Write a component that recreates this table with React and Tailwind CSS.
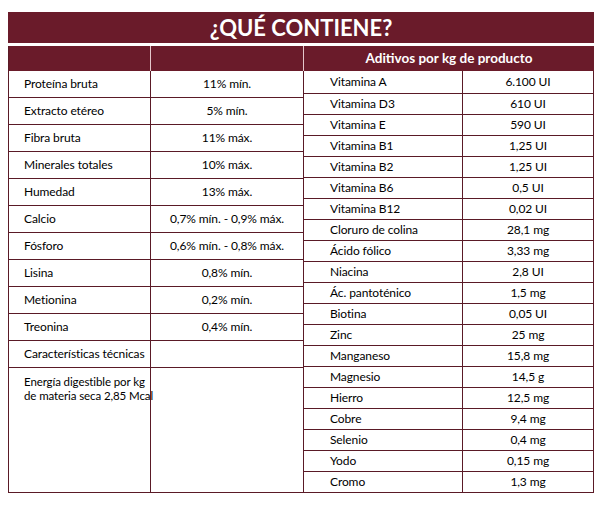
const nutrients = [
  ['Proteína bruta', '11% mín.'],
  ['Extracto etéreo', '5% mín.'],
  ['Fibra bruta', '11% máx.'],
  ['Minerales totales', '10% máx.'],
  ['Humedad', '13% máx.'],
  ['Calcio', '0,7% mín. - 0,9% máx.'],
  ['Fósforo', '0,6% mín. - 0,8% máx.'],
  ['Lisina', '0,8% mín.'],
  ['Metionina', '0,2% mín.'],
  ['Treonina', '0,4% mín.'],
];

const additives = [
  ['Vitamina A', '6.100 UI'],
  ['Vitamina D3', '610 UI'],
  ['Vitamina E', '590 UI'],
  ['Vitamina B1', '1,25 UI'],
  ['Vitamina B2', '1,25 UI'],
  ['Vitamina B6', '0,5 UI'],
  ['Vitamina B12', '0,02 UI'],
  ['Cloruro de colina', '28,1 mg'],
  ['Ácido fólico', '3,33 mg'],
  ['Niacina', '2,8 UI'],
  ['Ác. pantoténico', '1,5 mg'],
  ['Biotina', '0,05 UI'],
  ['Zinc', '25 mg'],
  ['Manganeso', '15,8 mg'],
  ['Magnesio', '14,5 g'],
  ['Hierro', '12,5 mg'],
  ['Cobre', '9,4 mg'],
  ['Selenio', '0,4 mg'],
  ['Yodo', '0,15 mg'],
  ['Cromo', '1,3 mg'],
];

function App() {
  return (
    <div
      className="min-h-[506px] bg-white pt-[12px] pl-[8px] text-black"
      style={{ fontFamily: 'Lato, "Liberation Sans", sans-serif' }}
    >
      <div className="w-[586px]">

        {/* Title */}
        <div className="flex h-[31px] items-center justify-center bg-[#6a1b2a]">
          <h1 className="text-[22px] font-bold leading-none text-white">¿QUÉ CONTIENE?</h1>
        </div>

        <div className="mt-[3px] flex">

          {/* Left table */}
          <div className="w-[296px] border-l border-[#5a1a26]">
            <div className="flex h-[25px] bg-[#6a1b2a]">
              <div className="w-[142px] border-r border-[#e4c6ca]" />
              <div className="flex-1 border-r border-[#e4c6ca]" />
            </div>
            {nutrients.map(([label, value]) => (
              <div key={label} className="flex h-[27px] border-b border-[#5a1a26] text-[12px] tracking-[-0.1px] whitespace-nowrap">
                <div className="flex w-[142px] items-center border-r border-[#5a1a26] pl-[15px]">{label}</div>
                <div className="flex flex-1 items-center justify-center border-r border-[#5a1a26]">{value}</div>
              </div>
            ))}
            <div className="flex h-[27px] border-b border-[#5a1a26] text-[12px] tracking-[-0.1px] whitespace-nowrap">
              <div className="flex w-[142px] items-center border-r border-[#5a1a26] pl-[15px]">Características técnicas</div>
              <div className="flex-1 border-r border-[#5a1a26]" />
            </div>
            <div className="flex h-[125px] border-b border-[#5a1a26]">
              <div className="w-[142px] whitespace-nowrap border-r border-[#5a1a26] pl-[15px] pt-[7px] text-[11.5px] leading-[14px] tracking-[-0.1px]">
                Energía digestible por kg<br />de materia seca 2,85 Mcal
              </div>
              <div className="flex-1 border-r border-[#5a1a26]" />
            </div>
          </div>

          {/* Right table */}
          <div className="w-[290px]">
            <div className="flex h-[25px] items-center justify-center bg-[#6a1b2a] text-[13.5px] font-bold text-white">
              Aditivos por kg de producto
            </div>
            {additives.map(([label, value], i) => (
              <div
                key={label}
                className={`flex border-b border-[#5a1a26] text-[12px] tracking-[-0.1px] whitespace-nowrap ${i === 0 ? 'h-[23px]' : 'h-[21px]'}`}
              >
                <div className="flex w-[159px] items-center border-r border-[#5a1a26] pl-[26px]">{label}</div>
                <div className="flex flex-1 items-center justify-center border-r border-[#5a1a26]">{value}</div>
              </div>
            ))}
          </div>
        </div>
      </div>
    </div>
  );
}

export default App;
